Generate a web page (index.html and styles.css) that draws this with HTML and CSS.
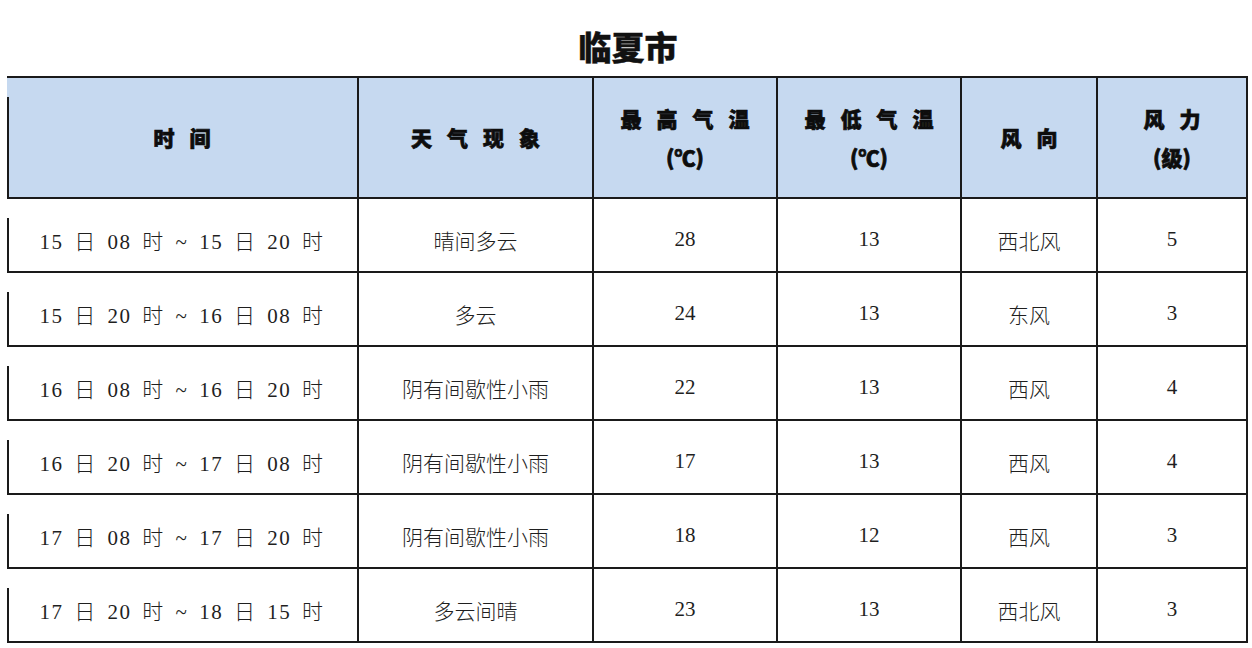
FILE: index.html
```html
<!DOCTYPE html>
<html lang="zh">
<head>
<meta charset="utf-8">
<title>临夏市</title>
<link rel="stylesheet" href="styles.css">
</head>
<body>
<h1 class="title">临夏市</h1>
<table class="forecast">
  <colgroup>
    <col class="c-time"><col class="c-wx"><col class="c-hi"><col class="c-lo"><col class="c-dir"><col class="c-pow">
  </colgroup>
  <thead>
    <tr>
      <th class="first"><span class="sp">时间</span></th>
      <th><span class="sp">天气现象</span></th>
      <th><span class="sp">最高气温</span><br>(℃)</th>
      <th><span class="sp">最低气温</span><br>(℃)</th>
      <th><span class="sp">风向</span></th>
      <th><span class="sp">风力</span><br>(级)</th>
    </tr>
  </thead>
  <tbody>
    <tr><td class="first">15 日 08 时 ~ 15 日 20 时</td><td>晴间多云</td><td>28</td><td>13</td><td>西北风</td><td>5</td></tr>
    <tr><td class="first">15 日 20 时 ~ 16 日 08 时</td><td>多云</td><td>24</td><td>13</td><td>东风</td><td>3</td></tr>
    <tr><td class="first">16 日 08 时 ~ 16 日 20 时</td><td>阴有间歇性小雨</td><td>22</td><td>13</td><td>西风</td><td>4</td></tr>
    <tr><td class="first">16 日 20 时 ~ 17 日 08 时</td><td>阴有间歇性小雨</td><td>17</td><td>13</td><td>西风</td><td>4</td></tr>
    <tr><td class="first">17 日 08 时 ~ 17 日 20 时</td><td>阴有间歇性小雨</td><td>18</td><td>12</td><td>西风</td><td>3</td></tr>
    <tr><td class="first">17 日 20 时 ~ 18 日 15 时</td><td>多云间晴</td><td>23</td><td>13</td><td>西北风</td><td>3</td></tr>
  </tbody>
</table>
</body>
</html>
```

FILE: styles.css
```css
html, body {
  margin: 0;
  padding: 0;
  background: #ffffff;
}
body {
  width: 1252px;
  height: 648px;
  overflow: hidden;
}
.title {
  margin: 0;
  height: 76px;
  padding-top: 24px;
  box-sizing: border-box;
  text-align: center;
  font-family: "Noto Sans CJK SC", sans-serif;
  font-weight: 900;
  font-size: 33px;
  line-height: 44px;
  color: #111;
  padding-left: 4px;
  -webkit-text-stroke: 0.4px #111;
}
.forecast {
  margin-left: 7px;
  width: 1240px;
  border-collapse: collapse;
  table-layout: fixed;
}
.c-time { width: 351px; }
.c-wx { width: 235px; }
.c-hi { width: 184px; }
.c-lo { width: 184px; }
.c-dir { width: 136px; }
.c-pow { width: 150px; }

.forecast th,
.forecast td {
  border: 2px solid #1a1a1a;
  text-align: center;
  padding: 0;
}
.forecast th.first,
.forecast td.first {
  border-left: none;
  background-image: linear-gradient(#1a1a1a, #1a1a1a);
  background-repeat: no-repeat;
  background-position: left bottom;
  background-size: 2px calc(100% - 19px);
}
.forecast th {
  height: 119px;
  background-color: #c6d9f0;
  font-family: "Noto Sans CJK SC", sans-serif;
  font-weight: 900;
  font-size: 21px;
  line-height: 39px;
  color: #0d0d0d;
  -webkit-text-stroke: 0.7px #0d0d0d;
}
.sp {
  letter-spacing: 15px;
  margin-right: -15px;
}
.forecast td {
  height: 74px;
  font-family: "Liberation Serif", "Noto Sans CJK SC", serif;
  font-weight: 300;
  font-size: 21px;
  color: #1f1f1f;
  padding-top: 9px;
  box-sizing: border-box;
}
.forecast td.first {
  letter-spacing: 1.5px;
  word-spacing: 4px;
}
```
